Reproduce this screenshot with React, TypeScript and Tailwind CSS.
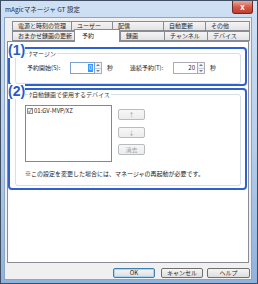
const jp = { fontFamily: '"Noto Sans CJK JP", "Noto Sans", sans-serif' };

function Tab({ label, w, selected }: { label: string; w: number; selected?: boolean }) {
	if (selected) {
		return (
			<div
				className="relative z-10 -mt-[2px] -mb-[1px] flex h-[13px] items-start border border-b-0 border-[#898c95] bg-white pl-[7px] pt-[2px] text-[6px] leading-[8px] text-[#1e1e1e]"
				style={{ width: w }}
			>
				{label}
			</div>
		);
	}
	return (
		<div
			className="flex h-[10px] items-center border border-r-0 border-[#898c95] bg-gradient-to-b from-[#f4f4f4] to-[#e3e3e3] pl-[5px] text-[6px] leading-[8px] text-[#1e1e1e] last:border-r"
			style={{ width: w }}
		>
			{label}
		</div>
	);
}

function Spinner() {
	return (
		<div className="flex h-[12px] w-[7px] flex-col border border-l-0 border-[#abadb3] bg-[#f4f4f4]">
			<div className="flex flex-1 items-center justify-center border-b border-[#c9ccd2]">
				<div className="h-0 w-0 border-x-[2px] border-b-[2px] border-x-transparent border-b-[#6d7fa3]" />
			</div>
			<div className="flex flex-1 items-center justify-center">
				<div className="h-0 w-0 border-x-[2px] border-t-[2px] border-x-transparent border-t-[#6d7fa3]" />
			</div>
		</div>
	);
}

function SideButton({ label }: { label: string }) {
	return (
		<div className="flex h-[11px] w-[27px] items-center justify-center rounded-[2px] border border-[#b8bcc0] bg-gradient-to-b from-[#f7f7f7] to-[#ececec] text-[6px] leading-none text-[#a3a3a3]">
			{label}
		</div>
	);
}

function DialogButton({ label, w, primary }: { label: string; w: number; primary?: boolean }) {
	return (
		<div
			className={`flex h-[10px] items-center justify-center rounded-[2px] border bg-gradient-to-b from-[#f5f5f5] to-[#dedede] text-[6px] leading-none text-[#1e1e1e] ${
				primary ? "border-[#3c7fb1] shadow-[inset_0_0_0_1px_#a6d6f5]" : "border-[#707070]"
			}`}
			style={{ width: w }}
		>
			{label}
		</div>
	);
}

function Marker({ n }: { n: number }) {
	return (
		<div
			className="absolute -left-[2px] -top-[6px] bg-white text-[14px] font-bold leading-[15px] text-[#2a5bc9]"
			style={{ fontFamily: '"Liberation Sans", Arial, sans-serif' }}
		>
			({n})
		</div>
	);
}

export default function App() {
	return (
		<div
			className="flex h-[284px] w-[258px] flex-col border border-[#3f4e63] bg-gradient-to-b from-[#cfe0f4] via-[#b6cfec] to-[#8fb2dc]"
			style={jp}
		>
			{/* タイトルバー */}
			<div className="flex h-[16px] items-start justify-between pl-[4px] pr-[4px]">
				<div className="pt-[4px] text-[6.5px] leading-[8px] text-[#1b2a3c]">mAgicマネージャ GT 設定</div>
				<div className="flex h-[13px] w-[21px] items-center justify-center rounded-b-[3px] border border-t-0 border-[#6e2b24] bg-gradient-to-b from-[#e8a89b] via-[#d2594a] to-[#c03f2c] text-[8px] font-bold leading-none text-white">
					x
				</div>
			</div>

			{/* 本体 */}
			<div className="mb-[3px] ml-[3px] mr-[5px] flex flex-1 flex-col border border-[#8aa5c6] bg-[#f0f0f0] pl-[2px]">
				{/* タブ */}
				<div className="mt-[3px] flex pl-[5px]">
					<Tab label="電源と時刻の管理" w={59} />
					<Tab label="ユーザー" w={41} />
					<Tab label="配信" w={51} />
					<Tab label="自動更新" w={42} />
					<Tab label="その他" w={45} />
				</div>
				<div className="flex items-end pl-[5px]">
					<Tab label="おまかせ録画の更新" w={62} />
					<Tab label="予約" w={46} selected />
					<Tab label="録画" w={44} />
					<Tab label="チャンネル" w={43} />
					<Tab label="デバイス" w={43} />
				</div>

				{/* パネル */}
				<div className="flex h-[222px] w-[242px] flex-col border border-[#898c95] bg-white">
					{/* (1) マージン */}
					<div className="relative mr-[1px] mt-[5px] h-[39px] rounded-[4px] border-2 border-[#2f62cc] px-[4px] pt-[4px]">
						<div className="relative ml-[1px] h-[31px] rounded-[3px] border border-[#d5dfe5]">
							<div className="absolute -top-[4px] left-[12px] bg-white px-[1px] text-[6px] leading-[7px] text-[#333]">
								ｸマージン
							</div>
							<div className="mt-[8px] flex items-center pl-[11px] text-[6px] leading-[8px] text-[#1e1e1e]">
								<span className="w-[43px]">予約開始(S):</span>
								<div className="flex h-[12px] w-[25px] items-center justify-end border border-[#7da2ce] bg-white pr-[1px]">
									<span className="bg-[#3399ff] px-[1px] text-white">0</span>
								</div>
								<Spinner />
								<span className="ml-[5px] w-[23px]">秒</span>
								<span className="w-[43px]">連続予約(T):</span>
								<div className="flex h-[12px] w-[25px] items-center justify-end border border-[#abadb3] bg-white pr-[2px]">
									20
								</div>
								<Spinner />
								<span className="ml-[5px]">秒</span>
							</div>
						</div>
						<Marker n={1} />
					</div>

					{/* (2) デバイス */}
					<div className="relative mr-[1px] mt-[2px] h-[102px] rounded-[4px] border-2 border-[#2f62cc] px-[4px] pt-[4px]">
						<div className="relative ml-[1px] h-[92px] rounded-[3px] border border-[#d5dfe5] pl-[9px] pt-[10px]">
							<div className="absolute -top-[4px] left-[12px] bg-white px-[1px] text-[6px] leading-[7px] text-[#333]">
								ｸ自動録画で使用するデバイス
							</div>
							<div className="flex gap-[6px]">
								<div className="h-[57px] w-[87px] border border-[#828790] bg-white pl-[1px] pt-[1px]">
									<div className="flex items-center gap-[1px] text-[6px] leading-[8px] text-[#1e1e1e]">
										<div className="flex h-[6px] w-[6px] items-center justify-center border border-[#8f8f8f] bg-[#f4f4f4] text-[6px] leading-none text-[#2a4f8a]">
											✓
										</div>
										<span>01:GV-MVP/XZ</span>
									</div>
								</div>
								<div className="flex flex-col pt-[4px]">
									<SideButton label="↑" />
									<div className="mt-[7px]">
										<SideButton label="↓" />
									</div>
									<div className="mt-[6px]">
										<SideButton label="消去" />
									</div>
								</div>
							</div>
							<div className="mt-[8px] text-[6px] leading-[8px] text-[#1e1e1e]">
								※この設定を変更した場合には、マネージャの再起動が必要です。
							</div>
						</div>
						<Marker n={2} />
					</div>
				</div>

				{/* ボタン */}
				<div className="mt-[5px] flex justify-end pr-[1px]">
					<DialogButton label="OK" w={42} primary />
					<div className="ml-[6px]">
						<DialogButton label="キャンセル" w={42} />
					</div>
					<div className="ml-[4px]">
						<DialogButton label="ヘルプ" w={43} />
					</div>
				</div>
			</div>
		</div>
	);
}
